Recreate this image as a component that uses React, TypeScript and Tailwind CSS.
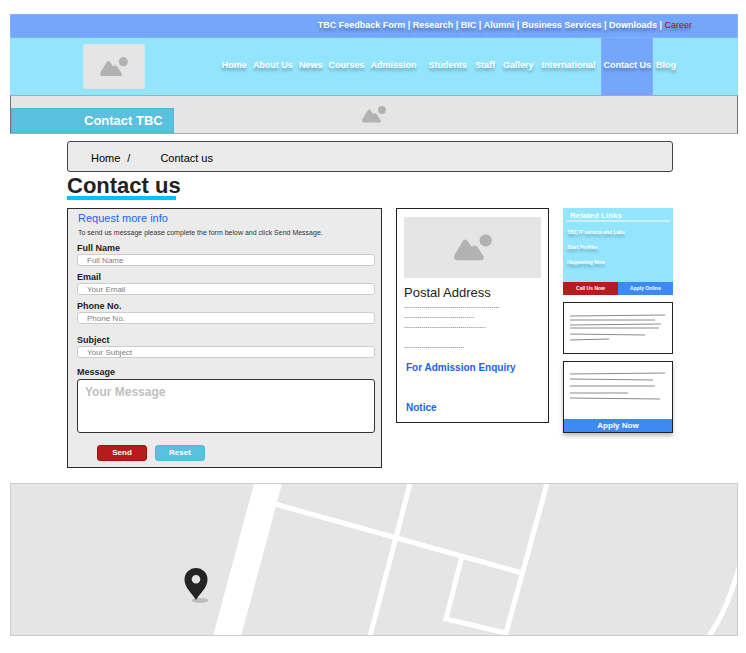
import React from "react";

const topLinks = ["TBC Feedback Form", "Research", "BIC", "Alumni", "Business Services", "Downloads"];
const mainLinks = ["Home", "About Us", "News", "Courses", "Admission"];
const moreLinks = ["Students", "Staff", "Gallery", "International"];
const textShadow = "[text-shadow:0_3px_3px_rgba(0,0,0,0.3)]";

function ImageIcon({ className }: { className: string }) {
  return (
    <svg viewBox="0 0 114 80" className={className} fill="#b2b2b2" aria-hidden="true">
      <path d="M2 62 L26 22 Q34 11 42 22 L54 39 Q63 30 71 40 L88 66 Q93 77 82 79 L9 79 Q-3 77 2 62 Z" />
      <circle cx="95" cy="19" r="18.5" />
    </svg>
  );
}

function Field({ id, label, placeholder }: { id: string; label: string; placeholder: string }) {
  return (
    <div className="flex flex-col">
      <label htmlFor={id} className="text-[9px] leading-3 font-bold">
        {label}
      </label>
      <input
        id={id}
        type="text"
        placeholder={placeholder}
        className="h-3 w-full rounded-[3px] border border-[#cccccc] bg-white px-[9px] text-[8px] leading-[10px] placeholder:text-[#808080]"
      />
    </div>
  );
}

function Header() {
  return (
    <header>
      <nav
        aria-label="Utility"
        className={`flex h-6 items-center justify-end border border-[#82b0ff] bg-[#74a7fc] pr-[45px] text-[9px] font-bold whitespace-pre text-white ${textShadow}`}
      >
        {topLinks.map((t) => (
          <React.Fragment key={t}>
            <a href="#">{t}</a>
            <span> | </span>
          </React.Fragment>
        ))}
        <a href="#" className="font-normal text-[#a80f22]">
          Career
        </a>
      </nav>
      <div className="flex h-[57px] justify-between bg-[#93e5fd] pr-[62px] pl-[73px]">
        <div className="mt-1.5 flex h-[45px] w-[62px] items-center justify-center border border-[#d3e5ea] bg-[#e5e5e5]">
          <ImageIcon className="w-7" />
        </div>
        <nav
          aria-label="Main"
          className={`flex items-stretch text-[9px] leading-[54px] font-bold whitespace-nowrap text-white ${textShadow}`}
        >
          <div className="flex gap-1.5 pr-3">
            {mainLinks.map((t) => (
              <a key={t} href="#">
                {t}
              </a>
            ))}
          </div>
          <div className="flex gap-2 pr-1.5">
            {moreLinks.map((t) => (
              <a key={t} href="#">
                {t}
              </a>
            ))}
          </div>
          <a href="#" aria-current="page" className="border-x border-[#82b0ff] bg-[#74a7fc] px-px">
            Contact Us
          </a>
          <a href="#" className="pl-[3px]">
            Blog
          </a>
        </nav>
      </div>
      <div className="flex h-[39px] items-end border border-x-[#707070] border-y-[#aaaaaa] bg-[#e5e5e5]">
        <div className="flex-1">
          <p className="w-[163px] border border-[#4fb9da] bg-[#5bc0de] pl-[72px] text-[13px] leading-[23px] font-bold text-white">
            Contact TBC
          </p>
        </div>
        <ImageIcon className="mb-2.5 w-6" />
        <div className="flex-1" />
      </div>
    </header>
  );
}

function ContactForm() {
  return (
    <form className="border border-[#2b2b2b] bg-[#ebebeb] pt-[3px] pr-1.5 pb-1.5 pl-[9px]">
      <h2 className="pl-px text-[11px] leading-3 text-[#1b62f2]">Request more info</h2>
      <p className="mt-0.5 pl-px text-[7px] leading-[14px] whitespace-nowrap text-[#333333]">
        To send us message please complete the form below and click Send Message.
      </p>
      <div className="mt-0.5 flex flex-col gap-[5px]">
        <Field id="name" label="Full Name" placeholder="Full Name" />
        <Field id="email" label="Email" placeholder="Your Email" />
        <Field id="phone" label="Phone No." placeholder="Phone No." />
      </div>
      <div className="mt-2.5 flex flex-col gap-[7px]">
        <Field id="subject" label="Subject" placeholder="Your Subject" />
        <div className="flex flex-col">
          <label htmlFor="message" className="text-[9px] leading-[14px] font-bold">
            Message
          </label>
          <textarea
            id="message"
            placeholder="Your Message"
            className="h-[54px] w-full resize-none rounded-[3px] border border-[#333333] bg-white px-[7px] py-1 text-[12px] leading-4 font-bold placeholder:text-[#c0c0c0]"
          />
        </div>
      </div>
      <div className="mt-3 flex gap-2 pl-5 text-[8px] font-bold text-white">
        <button type="submit" className="h-4 w-[50px] rounded-[3px] border border-[#a01414] bg-[#b71c1c]">
          Send
        </button>
        <button type="reset" className="h-4 w-[50px] rounded-[3px] border border-[#4fb9da] bg-[#5bc0de]">
          Reset
        </button>
      </div>
    </form>
  );
}

function AddressCard() {
  return (
    <section className="border border-[#222222] px-[7px] py-2">
      <div className="flex h-[61px] items-center justify-center bg-[#e5e5e5]">
        <ImageIcon className="w-[38px]" />
      </div>
      <h2 className="mt-[7px] text-[13px] leading-4">Postal Address</h2>
      <div className="text-[7px] leading-[10px] whitespace-nowrap text-[#222222]">
        <p>{".".repeat(49)}</p>
        <p>{".".repeat(36)}</p>
        <p>{".".repeat(42)}</p>
        <p className="mt-2.5">{".".repeat(31)}</p>
      </div>
      <div className="mt-[11px] flex flex-col items-start gap-7 pl-0.5 text-[10px] leading-3 font-bold whitespace-nowrap text-[#1b62f2]">
        <a href="#">For Admission Enquiry</a>
        <a href="#">Notice</a>
      </div>
    </section>
  );
}

function Scribble({ lines, height }: { lines: number[][]; height: number }) {
  return (
    <svg viewBox={`0 0 108 ${height}`} className="block w-full" aria-hidden="true">
      {lines.map(([y1, x2, y2]) => (
        <line key={y1} x1="6" y1={y1} x2={x2} y2={y2} stroke="#8a8a8a" strokeWidth="1" />
      ))}
    </svg>
  );
}

function Sidebar() {
  return (
    <aside className="flex flex-col gap-[7px]">
      <section className="bg-[#93e5fd] text-white">
        <div className={`px-[3px] pt-[3px] font-bold whitespace-nowrap ${textShadow}`}>
          <h2 className="border-b-2 border-[#c9f2fe] pl-1 text-[8px] leading-[9px] [text-shadow:none]">
            Related Links
          </h2>
          <ul className="flex flex-col pt-[3px] pb-3 pl-px text-[5px] leading-[15px]">
            <li>
              <a href="#">TBC IT service and Labs</a>
            </li>
            <li>
              <a href="#">Start Profiles</a>
            </li>
            <li>
              <a href="#">Happening Now</a>
            </li>
          </ul>
        </div>
        <div className="flex text-[5px] font-bold">
          <button type="button" className="h-[13px] flex-1 bg-[#b71c1c]">
            Call Us Now
          </button>
          <button type="button" className="h-[13px] flex-1 bg-[#3d8af7]">
            Apply Online
          </button>
        </div>
      </section>
      <section className="border border-[#222222]">
        <Scribble
          height={50}
          lines={[
            [13, 101, 12],
            [17, 91, 17],
            [22, 97, 21],
            [25, 95, 25],
            [31, 81, 32],
            [37, 45, 36],
          ]}
        />
      </section>
      <section className="border border-[#222222] shadow-[0_3px_4px_rgba(0,0,0,0.25)]">
        <Scribble
          height={57}
          lines={[
            [12, 101, 11],
            [17, 89, 18],
            [24, 91, 24],
            [31, 64, 31],
            [36, 96, 37],
          ]}
        />
        <button type="button" className="block h-[13px] w-full bg-[#3d8af7] text-[8px] leading-[13px] font-bold text-white">
          Apply Now
        </button>
      </section>
    </aside>
  );
}

function StreetMap() {
  return (
    <div className="border border-[#cccccc] bg-[#e5e5e5]">
      <svg
        viewBox="11 484 726 151"
        preserveAspectRatio="xMidYMid slice"
        className="block h-[151px] w-full"
        fill="none"
        stroke="#ffffff"
        strokeWidth="5"
        role="img"
        aria-label="Map"
      >
        <path d="M255 480 L283 480 L240 640 L212 640 Z" fill="#ffffff" stroke="none" />
        <path d="M275 504 L522 573" />
        <path d="M411 480 L369 640" />
        <path d="M548 480 L506 633 L446 619 L462 556" />
        <path d="M740 564 Q726 614 708 637" />
        <ellipse cx="200" cy="600.5" rx="8.5" ry="2.5" fill="#bdbdbd" stroke="none" />
        <path
          fillRule="evenodd"
          d="M196 600 C192 593 184.500 588 184.500 579.500 A11.500 11.500 0 0 1 207.500 579.500 C207.500 588 200 593 196 600 Z M196 575 A4.300 4.300 0 1 0 196 583.600 A4.300 4.300 0 1 0 196 575 Z"
          fill="#242424"
          stroke="none"
        />
      </svg>
    </div>
  );
}

export default function App() {
  return (
    <div className="bg-white pt-3.5 pr-2 pb-4 pl-2.5 font-['Liberation_Sans',Arial,sans-serif] text-[#222222]">
      <Header />
      <main className="pt-[7px]">
        <div className="pr-[65px] pl-[57px]">
          <nav
            aria-label="Breadcrumb"
            className="flex gap-[30px] rounded-[3px] border border-[#444444] bg-[#ebebeb] px-[23px] pt-[3px] text-[11px] leading-[26px] text-black"
          >
            <span className="flex gap-[7px]">
              <a href="#">Home</a>
              <span>/</span>
            </span>
            <a href="#" aria-current="page">
              Contact us
            </a>
          </nav>
          <h1 className="mt-[3px] text-[22px] leading-[21px] font-bold">Contact us</h1>
          <div className="h-1 w-[109px] bg-[#00c3f8]" />
          <div className="mt-2 grid grid-cols-[315fr_153fr_110fr] items-start gap-3.5">
            <ContactForm />
            <AddressCard />
            <Sidebar />
          </div>
        </div>
        <div className="pt-[15px]">
          <StreetMap />
        </div>
      </main>
    </div>
  );
}
